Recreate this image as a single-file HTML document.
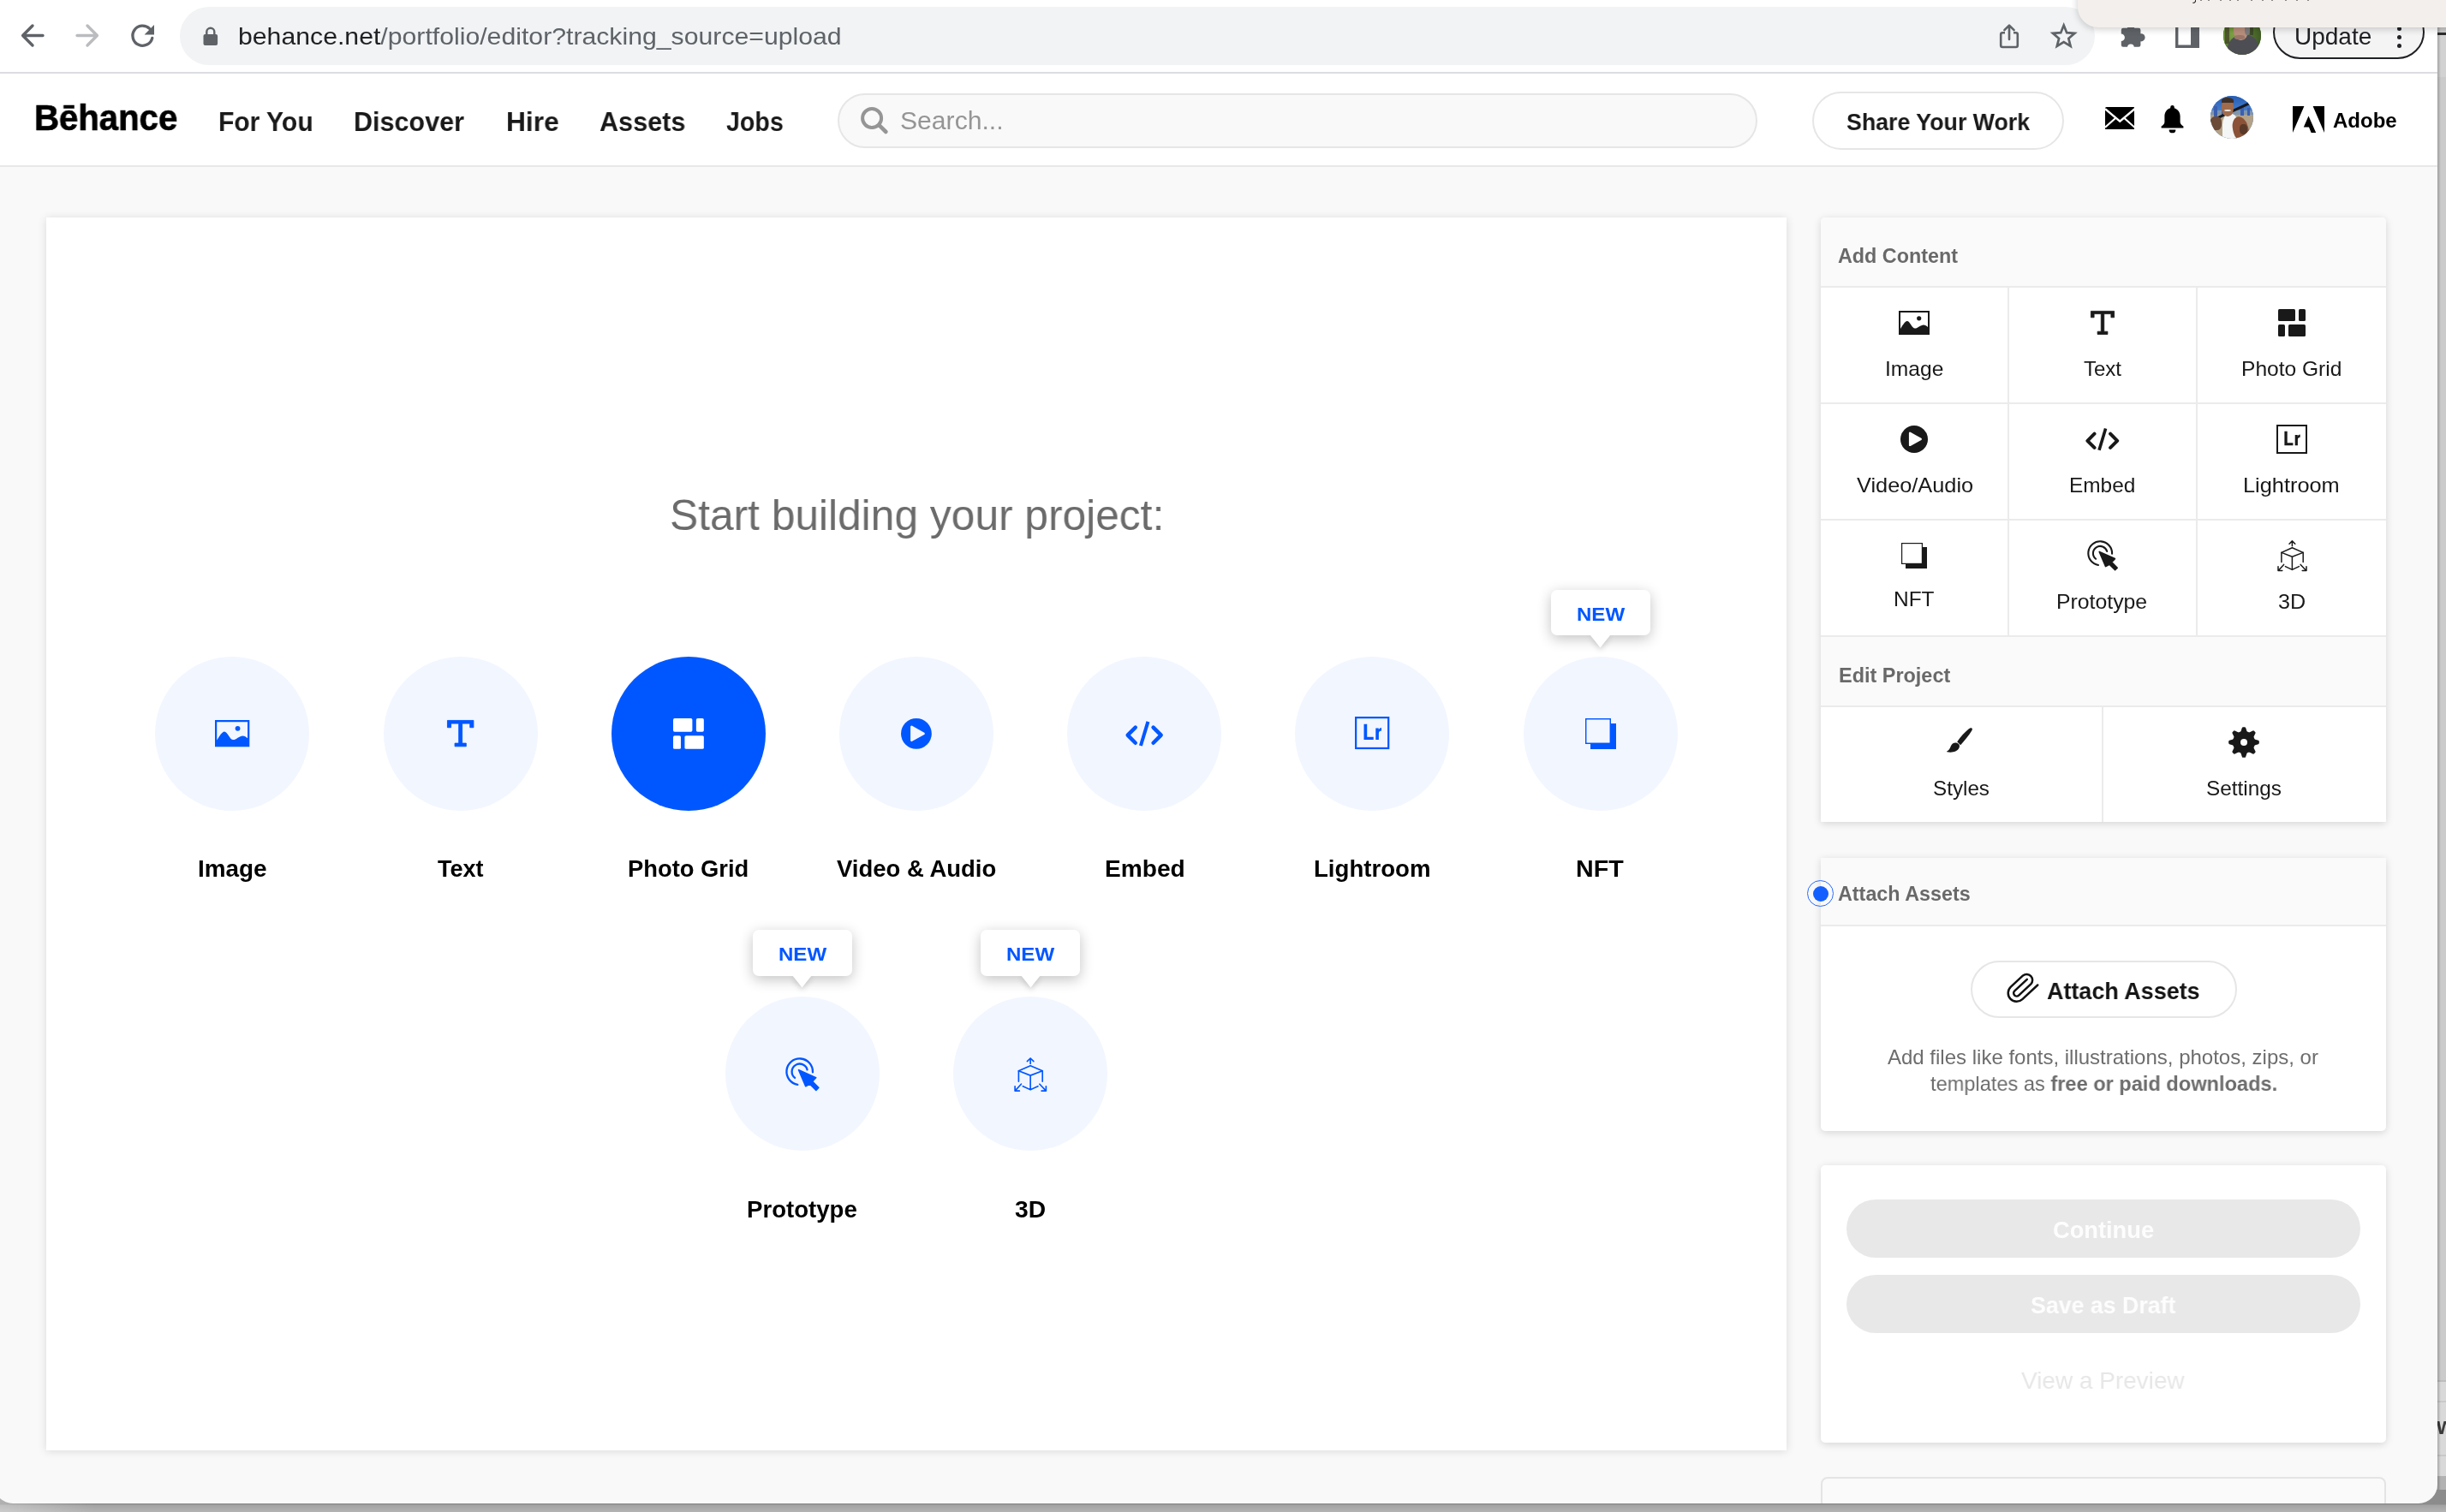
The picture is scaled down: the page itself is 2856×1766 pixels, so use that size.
<!DOCTYPE html>
<html><head><meta charset="utf-8"><title>Behance :: Editor</title>
<style>
html,body{margin:0;padding:0;}
body{width:2856px;height:1766px;overflow:hidden;position:relative;background:#a3a3a3;font-family:"Liberation Sans",sans-serif;}
.b{position:absolute;box-sizing:border-box;display:block;}
.t{position:absolute;white-space:nowrap;line-height:1;transform-origin:0 0;will-change:transform;}
#win{position:absolute;left:-7px;top:0;width:2853px;height:1756px;background:#f9f9f9;border-radius:0 0 22px 22px;overflow:hidden;}
#in{position:absolute;left:7px;top:0;width:2846px;height:1756px;}
</style></head><body>
<div class="b" style="left:2840px;top:0;width:16px;height:1766px;background:#cbcbcb;"></div>
<div class="b" style="left:2840px;top:41px;width:16px;height:49px;background:#d2d2d2;"></div>
<div class="b" style="left:2840px;top:38px;width:16px;height:3px;background:#2e2e2e;"></div>
<div class="b" style="left:2840px;top:1612px;width:16px;height:113px;background:#d9d9d9;border-top:2px solid #bdbdbd;"></div>
<div class="b" style="left:2840px;top:1636px;width:16px;height:1.5px;background:#c9c9c9;"></div>
<div class="b" style="left:2840px;top:1699px;width:16px;height:1.5px;background:#c9c9c9;"></div>
<div class="t" style="left:2845px;top:1653px;font-size:27px;font-weight:bold;color:#3c3c3c;">w</div>
<div class="b" style="left:2840px;top:1724px;width:16px;height:42px;background:#b2b2b2;"></div>
<div class="b" style="left:2846px;top:0;width:4px;height:1766px;background:linear-gradient(90deg,rgba(0,0,0,.22),rgba(0,0,0,0));"></div>
<div class="b" style="left:0;top:1740px;width:2856px;height:26px;background:linear-gradient(#8c8c8c 0,#8c8c8c 16.6px,#a4a4a4 18.5px,#b3b3b3 26px);"></div>
<div class="b" style="left:0;top:1740px;width:110px;height:26px;background:linear-gradient(90deg,rgba(255,255,255,.32),rgba(255,255,255,0));"></div>
<div id="win"><div id="in">
<div class="b" style="left:0px;top:0px;width:2846px;height:84px;background:#fff;"></div>
<div class="b" style="left:0px;top:84px;width:2846px;height:2px;background:#dcdde0;"></div>
<div class="b" style="left:210px;top:8px;width:2235.5px;height:67.5px;background:#f1f3f4;border-radius:34px;"></div>
<svg class="b" style="left:20px;top:22px;" width="40" height="40" viewBox="0 0 40 40"><path d="M30,19.5H7M18,8L6.6,19.5L18,31" fill="none" stroke="#5f6368" stroke-width="3.4" stroke-linecap="round" stroke-linejoin="round"/></svg>
<svg class="b" style="left:84px;top:22px;" width="40" height="40" viewBox="0 0 40 40"><path d="M6,19.5H29M18,8L29.4,19.5L18,31" fill="none" stroke="#bbbcbf" stroke-width="3.4" stroke-linecap="round" stroke-linejoin="round"/></svg>
<svg class="b" style="left:146px;top:22px;" width="40" height="40" viewBox="0 0 40 40"><path d="M28.6,11.4A11.6,11.6 0 1 0 31.8,22.4" fill="none" stroke="#5f6368" stroke-width="3.3" stroke-linecap="round"/><path d="M34,7V18.4H22.6Z" fill="#5f6368"/></svg>
<svg class="b" style="left:236px;top:30px;" width="20" height="24" viewBox="0 0 20 24"><rect x="1.5" y="10" width="16.6" height="13" rx="2" fill="#5f6368"/><path d="M5.3,11V7.2A4.5,4.5 0 0 1 14.3,7.2V11" fill="none" stroke="#5f6368" stroke-width="2.4"/></svg>
<div class="t" style="left:277.67px;top:28.80px;font-size:28px;color:#5f6368;transform:scaleX(1.0791);"><span style="color:#202124">behance.net</span>/portfolio/editor?tracking_source=upload</div>
<svg class="b" style="left:2330px;top:24px;" width="32" height="36" viewBox="0 0 32 36"><path d="M11,14.2H8.2A2,2 0 0 0 6.2,16.2V29A2,2 0 0 0 8.2,31H23.8A2,2 0 0 0 25.8,29V16.2A2,2 0 0 0 23.8,14.2H21" fill="none" stroke="#5f6368" stroke-width="2.6"/><path d="M16,22V6M10.4,11.2L16,5.6L21.6,11.2" fill="none" stroke="#5f6368" stroke-width="2.6" stroke-linecap="round" stroke-linejoin="round"/></svg>
<svg class="b" style="left:2393px;top:25px;" width="34" height="33" viewBox="0 0 34 33"><path d="M16.7,4.6L20.2,13.2L29.4,13.9L22.3,19.9L24.6,28.9L16.7,24L8.8,28.9L11.1,19.9L4,13.9L13.2,13.2Z" fill="none" stroke="#5f6368" stroke-width="2.7" stroke-linejoin="miter"/></svg>
<svg class="b" style="left:2470px;top:24px;" width="40" height="36" viewBox="0 0 40 36"><g fill="#5f6368"><rect x="6.8" y="8.8" width="22.6" height="22" rx="2.2"/><circle cx="18" cy="9" r="4.2"/><circle cx="30" cy="19.8" r="4.6"/></g><circle cx="6.6" cy="19.8" r="4.3" fill="#fff"/><circle cx="17.9" cy="31.4" r="3.9" fill="#fff"/></svg>
<svg class="b" style="left:2540px;top:26px;" width="28" height="30" viewBox="0 0 28 30"><path fill-rule="evenodd" fill="#5f6368" d="M0,0H28V30H0ZM3.4,3.4V26.6H18V3.4Z"/></svg>
<div class="b" style="left:2595.7px;top:19.3px;width:44.6px;height:44.6px;border-radius:50%;overflow:hidden;background:#4f7030;"><div class="b" style="left:0;top:0;width:45px;height:45px;background:radial-gradient(circle at 25% 45%,#7fa445 0,#55782f 45%,#33471f 100%);"></div><div class="b" style="left:2px;top:2px;width:5px;height:30px;background:#3a2f25;opacity:.6;"></div><div class="b" style="left:31px;top:0;width:4px;height:22px;background:#2f2a22;opacity:.55;"></div><div class="b" style="left:5px;top:22px;width:36px;height:34px;border-radius:46% 40% 0 0;background:#4d4e54;transform:rotate(-8deg);"></div><div class="b" style="left:12px;top:4px;width:17px;height:24px;border-radius:46%;background:#b98f7c;"></div><div class="b" style="left:13px;top:2px;width:19px;height:11px;border-radius:50% 60% 20% 30%;background:#8f8f92;"></div><div class="b" style="left:25px;top:8px;width:6px;height:14px;border-radius:40%;background:#7c7b7d;"></div><div class="b" style="left:13px;top:22px;width:12px;height:5px;border-radius:40%;background:#9a7668;"></div></div>
<div class="b" style="left:2654px;top:6px;width:177px;height:63px;border:2px solid #202124;border-radius:32px;background:#f4f4f5;"></div>
<div class="t" style="left:2678.84px;top:28.80px;font-size:28px;color:#202124;">Update</div>
<div class="b" style="left:2799px;top:30.5px;width:5.4px;height:5.4px;border-radius:50%;background:#202124;"></div>
<div class="b" style="left:2799px;top:40.5px;width:5.4px;height:5.4px;border-radius:50%;background:#202124;"></div>
<div class="b" style="left:2799px;top:50.5px;width:5.4px;height:5.4px;border-radius:50%;background:#202124;"></div>
<div class="b" style="left:0px;top:86px;width:2846px;height:108px;background:#fff;"></div>
<div class="b" style="left:0px;top:193px;width:2846px;height:2px;background:#e8e8e8;"></div>
<div class="t" style="left:39.65px;top:116.80px;font-size:42px;color:#000;font-weight:bold;transform:scaleX(0.9558);-webkit-text-stroke:0.7px #000;">Bēhance</div>
<div class="t" style="left:254.62px;top:126.30px;font-size:32px;color:#191919;font-weight:bold;transform:scaleX(0.9376);">For You</div>
<div class="t" style="left:413.39px;top:126.30px;font-size:32px;color:#191919;font-weight:bold;transform:scaleX(0.9539);">Discover</div>
<div class="t" style="left:590.81px;top:126.30px;font-size:32px;color:#191919;font-weight:bold;transform:scaleX(0.9909);">Hire</div>
<div class="t" style="left:699.87px;top:126.30px;font-size:32px;color:#191919;font-weight:bold;transform:scaleX(0.9562);">Assets</div>
<div class="t" style="left:847.57px;top:126.30px;font-size:32px;color:#191919;font-weight:bold;transform:scaleX(0.8940);">Jobs</div>
<div class="b" style="left:978px;top:109px;width:1074px;height:64px;background:#f9f9f9;border:2px solid #e6e6e6;border-radius:32px;"></div>
<svg class="b" style="left:1003px;top:124px;" width="36" height="36" viewBox="0 0 36 36"><circle cx="15.1" cy="14" r="11" fill="none" stroke="#959595" stroke-width="4"/><path d="M23.4,22.2L31.4,30" stroke="#959595" stroke-width="4.6" stroke-linecap="round"/></svg>
<div class="t" style="left:1051.14px;top:126.80px;font-size:29px;color:#959595;transform:scaleX(1.0391);">Search...</div>
<div class="b" style="left:2116px;top:107px;width:294px;height:67.5px;background:#fff;border:2px solid #e6e6e6;border-radius:34px;"></div>
<div class="t" style="left:2156.45px;top:128.80px;font-size:28px;color:#191919;font-weight:bold;transform:scaleX(0.9555);">Share Your Work</div>
<svg class="b" style="left:2457.5px;top:124.5px;" width="34.5" height="26.5" viewBox="0 0 34.5 26.5"><rect width="34.5" height="26.5" rx="1.5" fill="#000"/><path d="M0,2.2L17.25,16.6L34.5,2.2" fill="none" stroke="#fff" stroke-width="2.4"/><path d="M0,23.8L12.4,12.8M34.5,23.8L22.1,12.8" fill="none" stroke="#fff" stroke-width="2.2"/></svg>
<svg class="b" style="left:2522px;top:122px;" width="29" height="34" viewBox="0 0 29 34"><path fill="#000" d="M14.5,1A2.3,2.3 0 0 0 12.2,3.3V4.3C8,5.4 5.4,9.2 5.4,13.6V20.4C5.4,22.6 3.8,24 1.6,25.4V27.6H27.4V25.4C25.2,24 23.6,22.6 23.6,20.4V13.6C23.6,9.2 21,5.4 16.8,4.3V3.3A2.3,2.3 0 0 0 14.5,1Z"/><path fill="#000" d="M10.6,29.4H18.4A3.9,3.9 0 0 1 10.6,29.4Z"/></svg>
<div class="b" style="left:2581px;top:112px;width:50px;height:50px;border-radius:50%;overflow:hidden;background:#3c74c4;"><div class="b" style="left:0;top:0;width:50px;height:22px;background:linear-gradient(#245cb4,#4e86d2);"></div><div class="b" style="left:0;top:17px;width:50px;height:6px;background:#7f95ad;"></div><div class="b" style="left:0;top:22px;width:50px;height:28px;background:#b3a288;"></div><div class="b" style="left:4px;top:12px;width:4px;height:12px;background:#3a5fb0;"></div><div class="b" style="left:13px;top:14px;width:3px;height:10px;background:#3a5fb0;"></div><div class="b" style="left:35px;top:13px;width:4px;height:10px;background:#3a5fb0;"></div><div class="b" style="left:43px;top:14px;width:3px;height:9px;background:#3a5fb0;"></div><div class="b" style="left:-2px;top:16.5px;width:52px;height:3px;background:#17181c;transform:rotate(-24.5deg);"></div><div class="b" style="left:0px;top:24px;width:13px;height:16px;border-radius:40%;background:#6b4a38;"></div><div class="b" style="left:13.5px;top:21px;width:19px;height:34px;border-radius:38% 45% 0 0;background:#f4f5f5;"></div><div class="b" style="left:26px;top:23.5px;width:18px;height:28px;border-radius:50% 50% 30% 40%;background:#8b5237;transform:rotate(-14deg);"></div><div class="b" style="left:34px;top:33px;width:9px;height:12px;border-radius:40%;background:#4d3325;opacity:.8;"></div><div class="b" style="left:13px;top:3px;width:14px;height:21px;border-radius:46%;background:#a06c4c;"></div><div class="b" style="left:13px;top:2px;width:14px;height:6px;border-radius:50% 50% 0 0;background:#3d3029;"></div><div class="b" style="left:16px;top:15.5px;width:8px;height:2.5px;border-radius:40%;background:#f2e6df;"></div></div>
<svg class="b" style="left:2677px;top:124px;" width="37" height="31" viewBox="0 0 37 31"><path fill="#000" d="M0,0H13.4L0,31Z M23.6,0H37V31Z M18.5,11.4L27.2,31H21.6L19,24.6H12.8Z"/></svg>
<div class="t" style="left:2724.43px;top:128.80px;font-size:24px;color:#000;font-weight:bold;">Adobe</div>
<div class="b" style="left:54px;top:254px;width:2032px;height:1440px;background:#fff;box-shadow:0 1px 10px rgba(0,0,0,.13);"></div>
<div class="t" style="left:781.76px;top:576.95px;font-size:50.5px;color:#6b6b6b;transform:scaleX(0.9840);">Start building your project:</div>
<div class="b" style="left:180.9px;top:766.5px;width:180px;height:180px;border-radius:50%;background:#f2f6ff;"></div>
<svg class="b" style="left:250.74px;top:840.82px;overflow:visible;" width="40.32" height="31.36" viewBox="0 0 36 28"><path fill-rule="evenodd" fill="#0057ff" d="M0,0H36V28H0Z M2,2V21 C4,18 7.2,12 9.8,12 C13,12 15.5,20.6 19,20.6 C22,20.6 25.5,16.5 29,16.5 C30.8,16.5 32.5,17.6 34,19 V2Z"/><circle cx="23.7" cy="8.8" r="2.6" fill="#0057ff"/></svg>
<div class="t" style="left:231.36px;top:1002.30px;font-size:27px;color:#000;font-weight:bold;transform:scaleX(1.0328);">Image</div>
<div class="b" style="left:447.6px;top:766.5px;width:180px;height:180px;border-radius:50%;background:#f2f6ff;"></div>
<svg class="b" style="left:521.92px;top:840.82px;overflow:visible;" width="31.36" height="31.36" viewBox="0 0 28 28"><path fill="#0057ff" stroke="#0057ff" stroke-width="0.8" stroke-linejoin="round" d="M0.4,0.4H27.6V7.8H23.9V3.6H15.75V24.2H19.9V27.5H8.1V24.2H12.25V3.6H4.1V7.8H0.4Z"/></svg>
<div class="t" style="left:510.60px;top:1002.30px;font-size:27px;color:#000;font-weight:bold;">Text</div>
<div class="b" style="left:714px;top:766.5px;width:180px;height:180px;border-radius:50%;background:#0057ff;"></div>
<svg class="b" style="left:786.08px;top:838.58px;overflow:visible;" width="35.84" height="35.84" viewBox="0 0 32 32"><g fill="#fff"><rect x="0" y="0" width="20" height="14" rx="1.5"/><rect x="24" y="0" width="8" height="14" rx="1.5"/><rect x="0" y="18" width="8" height="14" rx="1.5"/><rect x="12" y="18" width="20" height="14" rx="1.5"/></g></svg>
<div class="t" style="left:733.19px;top:1002.30px;font-size:27px;color:#000;font-weight:bold;transform:scaleX(1.0131);">Photo Grid</div>
<div class="b" style="left:979.8px;top:766.5px;width:180px;height:180px;border-radius:50%;background:#f2f6ff;"></div>
<svg class="b" style="left:1051.88px;top:838.58px;overflow:visible;" width="35.84" height="35.84" viewBox="0 0 32 32"><circle cx="16" cy="16" r="16" fill="#0057ff"/><path d="M11.1,8.8V22.9L23.7,15.9Z" fill="#f2f6ff" stroke="#f2f6ff" stroke-width="2.4" stroke-linejoin="round"/></svg>
<div class="t" style="left:976.84px;top:1002.30px;font-size:27px;color:#000;font-weight:bold;transform:scaleX(1.0177);">Video &amp; Audio</div>
<div class="b" style="left:1246px;top:766.5px;width:180px;height:180px;border-radius:50%;background:#f2f6ff;"></div>
<svg class="b" style="left:1313.82px;top:840.82px;overflow:visible;" width="44.352" height="31.36" viewBox="0 0 39.6 28"><g fill="none" stroke="#0057ff" stroke-width="4" stroke-linecap="round" stroke-linejoin="round"><path d="M10.5,7.7L2.4,15.8L10.5,23.9"/><path d="M29.1,7.7L37.2,15.8L29.1,23.9"/></g><path d="M23.6,1.6L16,26.8" fill="none" stroke="#0057ff" stroke-width="3.6"/></svg>
<div class="t" style="left:1289.54px;top:1002.30px;font-size:27px;color:#000;font-weight:bold;transform:scaleX(1.0410);">Embed</div>
<div class="b" style="left:1511.9px;top:766.5px;width:180px;height:180px;border-radius:50%;background:#f2f6ff;"></div>
<svg class="b" style="left:1581.74px;top:837.46px;overflow:visible;" width="40.32" height="38.08" viewBox="0 0 36 34"><rect x="1" y="1" width="34" height="32" fill="none" stroke="#0057ff" stroke-width="2"/><path fill="#0057ff" d="M9.4,7.8H12.7V21.3H19.4V24.2H9.4Z M21.7,12H24.8V13.9C25.3,12.3 26.3,11.5 27.7,11.5V14.7C26,14.7 24.9,15.7 24.9,17.5V24.2H21.7Z"/></svg>
<div class="t" style="left:1534.18px;top:1002.30px;font-size:27px;color:#000;font-weight:bold;transform:scaleX(1.0228);">Lightroom</div>
<div class="b" style="left:1778.9px;top:766.5px;width:180px;height:180px;border-radius:50%;background:#f2f6ff;"></div>
<svg class="b" style="left:1850.9px;top:838.5px;overflow:visible;" width="36" height="36" viewBox="0 0 30 30"><rect x="5" y="5" width="25" height="25" fill="#0057ff"/><rect x="0.6" y="0.6" width="23.8" height="23.8" fill="#f2f6ff" stroke="#0057ff" stroke-width="1.2"/></svg>
<div class="t" style="left:1840.41px;top:1002.30px;font-size:27px;color:#000;font-weight:bold;transform:scaleX(1.0608);">NFT</div>
<div class="b" style="left:1810.9px;top:688.5px;width:116px;height:53.5px;background:#fff;border-radius:7px;box-shadow:0 4px 16px rgba(0,0,0,.24);"></div>
<svg class="b" style="left:1857.4px;top:741.5px;filter:drop-shadow(0 3px 3px rgba(0,0,0,.16));" width="23" height="15" viewBox="0 0 23 15"><path d="M0,0H23L11.5,14.6Z" fill="#fff"/></svg>
<div class="b" style="left:1848.9px;top:728.5px;width:40px;height:13.5px;background:#fff;"></div>
<div class="t" style="left:1841.26px;top:706.75px;font-size:22.5px;color:#0057ff;font-weight:bold;transform:scaleX(1.0689);">NEW</div>
<div class="b" style="left:846.8px;top:1164.2px;width:180px;height:180px;border-radius:50%;background:#f2f6ff;"></div>
<svg class="b" style="left:917.45px;top:1234.92px;overflow:visible;" width="40.7" height="40.15" viewBox="0 0 37 36.5"><g fill="none" stroke="#0057ff" stroke-width="2.1" stroke-linecap="round"><path d="M13.03,28.93A13.9,13.9 0 1 1 29.09,15.69"/><path d="M10.09,21.74A8.3,8.3 0 1 1 23.22,13.05"/></g><path fill="#0057ff" stroke="#0057ff" stroke-width="1.6" stroke-linejoin="round" d="M14.2,13.4L32.4,21.6L28.6,25.6L35.2,32.2L32.6,34.8L26,28.2L21.6,30.6Z"/></svg>
<div class="t" style="left:871.98px;top:1399.80px;font-size:27px;color:#000;font-weight:bold;transform:scaleX(1.0218);">Prototype</div>
<div class="b" style="left:878.8px;top:1086.2px;width:116px;height:53.5px;background:#fff;border-radius:7px;box-shadow:0 4px 16px rgba(0,0,0,.24);"></div>
<svg class="b" style="left:925.3px;top:1139.2px;filter:drop-shadow(0 3px 3px rgba(0,0,0,.16));" width="23" height="15" viewBox="0 0 23 15"><path d="M0,0H23L11.5,14.6Z" fill="#fff"/></svg>
<div class="b" style="left:916.8px;top:1126.2px;width:40px;height:13.5px;background:#fff;"></div>
<div class="t" style="left:909.16px;top:1104.45px;font-size:22.5px;color:#0057ff;font-weight:bold;transform:scaleX(1.0689);">NEW</div>
<div class="b" style="left:1113.1px;top:1164.2px;width:180px;height:180px;border-radius:50%;background:#f2f6ff;"></div>
<svg class="b" style="left:1183.96px;top:1234.98px;overflow:visible;" width="38.28" height="40.04" viewBox="0 0 34.8 36.4"><g fill="none" stroke="#0057ff" stroke-width="1.5" stroke-linecap="round" stroke-linejoin="round"><path d="M4.9,25.6V14.4L17.4,8.8L30.2,14.4V25.6"/><path d="M4.9,14.4L17.4,19.2L30.2,14.4M17.4,19.2V34.4M9.4,30.6L17.4,34.4L25.4,30.6"/><path d="M17.4,6.8V1M14,4.2L17.4,0.9L20.8,4.2"/><path d="M7.6,28.4L1.2,35.4M1,30.8V35.6H5.8"/><path d="M27.2,28.4L33.8,35.4M34,30.8V35.6H29.2"/></g></svg>
<div class="t" style="left:1185.33px;top:1399.80px;font-size:27px;color:#000;font-weight:bold;transform:scaleX(1.0456);">3D</div>
<div class="b" style="left:1145.1px;top:1086.2px;width:116px;height:53.5px;background:#fff;border-radius:7px;box-shadow:0 4px 16px rgba(0,0,0,.24);"></div>
<svg class="b" style="left:1191.6px;top:1139.2px;filter:drop-shadow(0 3px 3px rgba(0,0,0,.16));" width="23" height="15" viewBox="0 0 23 15"><path d="M0,0H23L11.5,14.6Z" fill="#fff"/></svg>
<div class="b" style="left:1183.1px;top:1126.2px;width:40px;height:13.5px;background:#fff;"></div>
<div class="t" style="left:1175.46px;top:1104.45px;font-size:22.5px;color:#0057ff;font-weight:bold;transform:scaleX(1.0689);">NEW</div>
<div class="b" style="left:2126px;top:254px;width:660px;height:706px;background:#fff;border-radius:5px 5px 1px 1px;box-shadow:0 2px 10px rgba(0,0,0,.15);"></div>
<div class="b" style="left:2126px;top:254px;width:660px;height:81px;background:#fafafa;border-radius:5px 5px 0 0;"></div>
<div class="t" style="left:2146.04px;top:287.80px;font-size:23px;color:#696969;font-weight:bold;transform:scaleX(1.0142);">Add Content</div>
<div class="b" style="left:2126px;top:334px;width:660px;height:2px;background:#ebebeb;"></div>
<div class="b" style="left:2126px;top:470px;width:660px;height:2px;background:#ebebeb;"></div>
<div class="b" style="left:2126px;top:606px;width:660px;height:2px;background:#ebebeb;"></div>
<div class="b" style="left:2126px;top:741.5px;width:660px;height:2px;background:#ebebeb;"></div>
<div class="b" style="left:2126px;top:824px;width:660px;height:2px;background:#ebebeb;"></div>
<div class="b" style="left:2126px;top:743.5px;width:660px;height:80.5px;background:#fafafa;"></div>
<div class="b" style="left:2343.6px;top:336px;width:2px;height:405.5px;background:#ebebeb;"></div>
<div class="b" style="left:2563.8px;top:336px;width:2px;height:405.5px;background:#ebebeb;"></div>
<div class="b" style="left:2454px;top:826px;width:2px;height:134px;background:#ebebeb;"></div>
<svg class="b" style="left:2217px;top:363px;overflow:visible;" width="36" height="28" viewBox="0 0 36 28"><path fill-rule="evenodd" fill="#191919" d="M0,0H36V28H0Z M2,2V21 C4,18 7.2,12 9.8,12 C13,12 15.5,20.6 19,20.6 C22,20.6 25.5,16.5 29,16.5 C30.8,16.5 32.5,17.6 34,19 V2Z"/><circle cx="23.7" cy="8.8" r="2.6" fill="#191919"/></svg>
<div class="t" style="left:2200.74px;top:418.80px;font-size:24px;color:#191919;transform:scaleX(1.0247);">Image</div>
<svg class="b" style="left:2440.7px;top:363px;overflow:visible;" width="28" height="28" viewBox="0 0 28 28"><path fill="#191919" stroke="#191919" stroke-width="0.8" stroke-linejoin="round" d="M0.4,0.4H27.6V7.8H23.9V3.6H15.75V24.2H19.9V27.5H8.1V24.2H12.25V3.6H4.1V7.8H0.4Z"/></svg>
<div class="t" style="left:2432.68px;top:418.80px;font-size:24px;color:#191919;transform:scaleX(0.9926);">Text</div>
<svg class="b" style="left:2659.9px;top:361px;overflow:visible;" width="32" height="32" viewBox="0 0 32 32"><g fill="#191919"><rect x="0" y="0" width="20" height="14" rx="1.5"/><rect x="24" y="0" width="8" height="14" rx="1.5"/><rect x="0" y="18" width="8" height="14" rx="1.5"/><rect x="12" y="18" width="20" height="14" rx="1.5"/></g></svg>
<div class="t" style="left:2616.99px;top:418.80px;font-size:24px;color:#191919;transform:scaleX(1.0232);">Photo Grid</div>
<svg class="b" style="left:2219px;top:497px;overflow:visible;" width="32" height="32" viewBox="0 0 32 32"><circle cx="16" cy="16" r="16" fill="#191919"/><path d="M11.1,8.8V22.9L23.7,15.9Z" fill="#fff" stroke="#fff" stroke-width="2.4" stroke-linejoin="round"/></svg>
<div class="t" style="left:2167.90px;top:554.80px;font-size:24px;color:#191919;transform:scaleX(1.0553);">Video/Audio</div>
<svg class="b" style="left:2434.9px;top:499px;overflow:visible;" width="39.6" height="28" viewBox="0 0 39.6 28"><g fill="none" stroke="#191919" stroke-width="4" stroke-linecap="round" stroke-linejoin="round"><path d="M10.5,7.7L2.4,15.8L10.5,23.9"/><path d="M29.1,7.7L37.2,15.8L29.1,23.9"/></g><path d="M23.6,1.6L16,26.8" fill="none" stroke="#191919" stroke-width="3.6"/></svg>
<div class="t" style="left:2415.85px;top:554.80px;font-size:24px;color:#191919;transform:scaleX(1.0162);">Embed</div>
<svg class="b" style="left:2657.9px;top:496px;overflow:visible;" width="36" height="34" viewBox="0 0 36 34"><rect x="1" y="1" width="34" height="32" fill="none" stroke="#191919" stroke-width="2"/><path fill="#191919" d="M9.4,7.8H12.7V21.3H19.4V24.2H9.4Z M21.7,12H24.8V13.9C25.3,12.3 26.3,11.5 27.7,11.5V14.7C26,14.7 24.9,15.7 24.9,17.5V24.2H21.7Z"/></svg>
<div class="t" style="left:2619.32px;top:554.80px;font-size:24px;color:#191919;transform:scaleX(1.0562);">Lightroom</div>
<svg class="b" style="left:2220px;top:634px;overflow:visible;" width="30" height="30" viewBox="0 0 30 30"><rect x="5" y="5" width="25" height="25" fill="#191919"/><rect x="0.6" y="0.6" width="23.8" height="23.8" fill="#fff" stroke="#191919" stroke-width="1.2"/></svg>
<div class="t" style="left:2210.99px;top:687.80px;font-size:24px;color:#191919;transform:scaleX(1.0196);">NFT</div>
<svg class="b" style="left:2437.2px;top:630.75px;overflow:visible;" width="37" height="36.5" viewBox="0 0 37 36.5"><g fill="none" stroke="#191919" stroke-width="2.1" stroke-linecap="round"><path d="M13.03,28.93A13.9,13.9 0 1 1 29.09,15.69"/><path d="M10.09,21.74A8.3,8.3 0 1 1 23.22,13.05"/></g><path fill="#191919" stroke="#191919" stroke-width="1.6" stroke-linejoin="round" d="M14.2,13.4L32.4,21.6L28.6,25.6L35.2,32.2L32.6,34.8L26,28.2L21.6,30.6Z"/></svg>
<div class="t" style="left:2401.17px;top:690.80px;font-size:24px;color:#191919;transform:scaleX(1.0331);">Prototype</div>
<svg class="b" style="left:2658.5px;top:630.8px;overflow:visible;" width="34.8" height="36.4" viewBox="0 0 34.8 36.4"><g fill="none" stroke="#191919" stroke-width="1.5" stroke-linecap="round" stroke-linejoin="round"><path d="M4.9,25.6V14.4L17.4,8.8L30.2,14.4V25.6"/><path d="M4.9,14.4L17.4,19.2L30.2,14.4M17.4,19.2V34.4M9.4,30.6L17.4,34.4L25.4,30.6"/><path d="M17.4,6.8V1M14,4.2L17.4,0.9L20.8,4.2"/><path d="M7.6,28.4L1.2,35.4M1,30.8V35.6H5.8"/><path d="M27.2,28.4L33.8,35.4M34,30.8V35.6H29.2"/></g></svg>
<div class="t" style="left:2659.94px;top:690.80px;font-size:24px;color:#191919;transform:scaleX(1.0478);">3D</div>
<div class="t" style="left:2146.65px;top:778.30px;font-size:23px;color:#696969;font-weight:bold;transform:scaleX(1.0189);">Edit Project</div>
<svg class="b" style="left:2273.2px;top:850.1px;overflow:visible;" width="30" height="29" viewBox="0 0 30 29"><path fill="#191919" d="M29.4,0.6C28.2,-0.2 26.8,0.6 25.6,1.6C21,5.4 15.6,11.4 12.2,16.4L16.2,20.2C20.6,15.6 26,8.8 29.2,3.6C29.8,2.6 30.2,1.2 29.4,0.6ZM10.8,17.4C8.2,17.2 5.6,18.8 4.8,21.6C4,24.2 2.6,26.4 0.2,27.6C0,27.8 0,28 0.4,28.2C5.6,29.4 12,28.4 14.4,23.8C15.2,22.2 15,20.6 14.6,19.8C13.8,18.4 12.4,17.6 10.8,17.4Z"/></svg>
<div class="t" style="left:2256.91px;top:908.80px;font-size:24px;color:#191919;transform:scaleX(1.0093);">Styles</div>
<svg class="b" style="left:2602px;top:849px;overflow:visible;" width="36" height="36" viewBox="0 0 36 36"><path d="M15.68,5.92L17.14,1.52L18.86,1.52L20.32,5.92Q22.21,7.84 24.90,7.82L24.90,7.82L29.05,5.74L30.26,6.95L28.18,11.10Q28.16,13.79 30.08,15.68L30.08,15.68L34.48,17.14L34.48,18.86L30.08,20.32Q28.16,22.21 28.18,24.90L28.18,24.90L30.26,29.05L29.05,30.26L24.90,28.18Q22.21,28.16 20.32,30.08L20.32,30.08L18.86,34.48L17.14,34.48L15.68,30.08Q13.79,28.16 11.10,28.18L11.10,28.18L6.95,30.26L5.74,29.05L7.82,24.90Q7.84,22.21 5.92,20.32L5.92,20.32L1.52,18.86L1.52,17.14L5.92,15.68Q7.84,13.79 7.82,11.10L7.82,11.10L5.74,6.95L6.95,5.74L11.10,7.82Q13.79,7.84 15.68,5.92Z" fill="#191919" stroke="#191919" stroke-width="2.7" stroke-linejoin="round"/><circle cx="18" cy="18" r="4" fill="#fff"/></svg>
<div class="t" style="left:2575.90px;top:908.80px;font-size:24px;color:#191919;transform:scaleX(1.0145);">Settings</div>
<div class="b" style="left:2126px;top:1002px;width:660px;height:319px;background:#fff;border-radius:1px 1px 5px 5px;box-shadow:0 2px 10px rgba(0,0,0,.15);"></div>
<div class="b" style="left:2126px;top:1002px;width:660px;height:78px;background:#fafafa;border-radius:1px 1px 0 0;"></div>
<div class="b" style="left:2126px;top:1080px;width:660px;height:2px;background:#ebebeb;"></div>
<div class="b" style="left:2110.4px;top:1028.2px;width:31px;height:31px;border-radius:50%;border:1.5px solid #2a6bff;"></div>
<div class="b" style="left:2116.8px;top:1034.8px;width:18.4px;height:18.4px;border-radius:50%;background:#1460ff;"></div>
<div class="t" style="left:2145.94px;top:1032.80px;font-size:23px;color:#696969;font-weight:bold;transform:scaleX(1.0141);">Attach Assets</div>
<div class="b" style="left:2300.5px;top:1122px;width:311px;height:66.5px;background:#fff;border:2px solid #e6e6e6;border-radius:34px;"></div>
<svg class="b" style="left:2330px;top:1125px;" width="60" height="60" viewBox="0 0 60 60"><path transform="translate(22.1,23.7) rotate(-43)" d="M18.65,19.8L-5.8,19.8A9.9,9.9 0 0 1 -5.8,0L13.6,0A6.8,6.8 0 0 1 13.6,13.57L-5.8,13.57A3.55,3.55 0 0 1 -5.8,6.47L14.1,6.47" fill="none" stroke="#111" stroke-width="2.5" stroke-linecap="round" stroke-linejoin="round"/></svg>
<div class="t" style="left:2390.15px;top:1143.80px;font-size:28px;color:#141414;font-weight:bold;transform:scaleX(0.9619);">Attach Assets</div>
<div class="t" style="left:2204.35px;top:1222.80px;font-size:24px;color:#6d6d6d;">Add files like fonts, illustrations, photos, zips, or</div>
<div class="t" style="left:2254.45px;top:1254.30px;font-size:24px;color:#6d6d6d;transform:scaleX(0.9832);">templates as <b>free or paid downloads.</b></div>
<div class="b" style="left:2126px;top:1361px;width:660px;height:323.7px;background:#fff;border-radius:5px;box-shadow:0 2px 10px rgba(0,0,0,.15);"></div>
<div class="b" style="left:2156px;top:1401px;width:600px;height:68px;background:#e8e8e8;border-radius:34px;"></div>
<div class="t" style="left:2396.88px;top:1423.80px;font-size:27px;color:#fdfdfd;font-weight:bold;transform:scaleX(1.0092);">Continue</div>
<div class="b" style="left:2156px;top:1489px;width:600px;height:68px;background:#e8e8e8;border-radius:34px;"></div>
<div class="t" style="left:2371.25px;top:1511.80px;font-size:27px;color:#fdfdfd;font-weight:bold;transform:scaleX(0.9905);">Save as Draft</div>
<div class="t" style="left:2360.39px;top:1598.05px;font-size:28.5px;color:#e7e7e7;transform:scaleX(0.9805);">View a Preview</div>
<div class="b" style="left:2126px;top:1725px;width:660px;height:80px;background:#fafafa;border:2px solid #e4e4e4;border-radius:8px;"></div>
</div></div>
<div class="b" style="left:2426px;top:-30px;width:460px;height:61.5px;background:#f3efec;border-radius:24px;box-shadow:0 2px 9px rgba(0,0,0,.2);"></div>
<div class="b" style="left:2559.5px;top:-3px;width:4.2px;height:7px;border:1.6px solid #1a1a1a;border-top:none;border-right:none;border-radius:0 0 0 4px;transform:scaleX(-1);"></div>
<div class="b" style="left:2569px;top:0;width:2.4px;height:1.2px;background:#8a8583;"></div>
<div class="b" style="left:2578px;top:0;width:2.4px;height:1.2px;background:#8a8583;"></div>
<div class="b" style="left:2592px;top:0;width:2.4px;height:1.2px;background:#8a8583;"></div>
<div class="b" style="left:2603px;top:0;width:2.4px;height:1.2px;background:#8a8583;"></div>
<div class="b" style="left:2612px;top:0;width:2.4px;height:1.2px;background:#8a8583;"></div>
<div class="b" style="left:2628px;top:0;width:2.4px;height:1.2px;background:#8a8583;"></div>
<div class="b" style="left:2641px;top:0;width:2.4px;height:1.2px;background:#8a8583;"></div>
<div class="b" style="left:2652px;top:0;width:2.4px;height:1.2px;background:#8a8583;"></div>
<div class="b" style="left:2668px;top:0;width:2.4px;height:1.2px;background:#8a8583;"></div>
<div class="b" style="left:2681px;top:0;width:2.4px;height:1.2px;background:#8a8583;"></div>
<div class="b" style="left:2694px;top:0;width:2.4px;height:1.2px;background:#8a8583;"></div>
</body></html>
